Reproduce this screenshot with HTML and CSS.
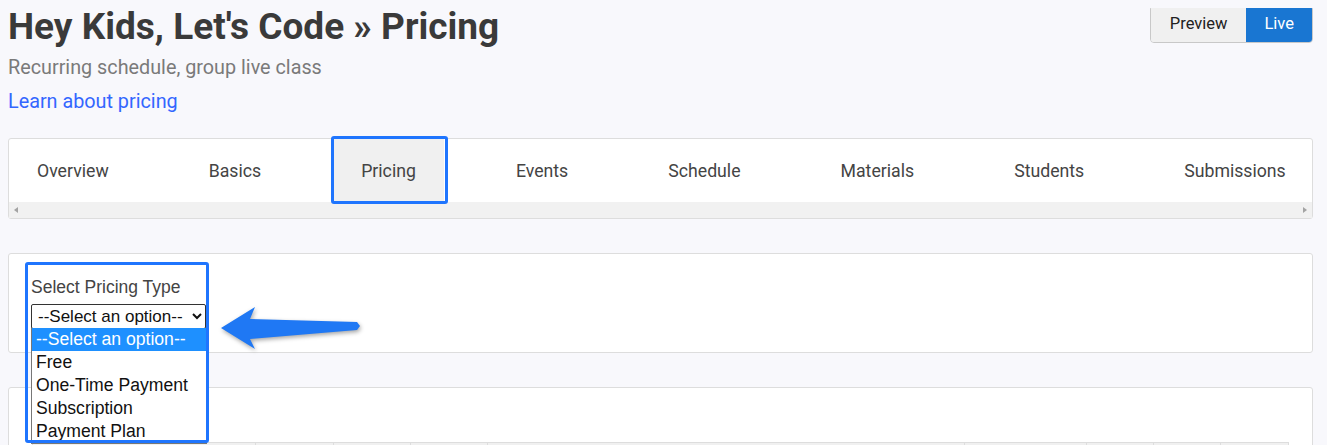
FILE: index.html
```html
<!DOCTYPE html>
<html lang="en">
<head>
    <meta charset="UTF-8">
    <title>Hey Kids, Let's Code » Pricing</title>
    <link rel="stylesheet" href="styles.css">
</head>
<body>
    <div class="page-head">
        <div>
            <h1>Hey Kids, Let's Code » Pricing</h1>
            <div class="subtitle">Recurring schedule, group live class</div>
            <a class="learn" href="#">Learn about pricing</a>
        </div>
        <div class="toggle">
            <span class="toggle-btn">Preview</span>
            <span class="toggle-btn active">Live</span>
        </div>
    </div>

    <div class="card tabs-card">
        <div class="tabs">
            <span class="tab">Overview</span>
            <span class="tab">Basics</span>
            <span class="tab current">Pricing</span>
            <span class="tab">Events</span>
            <span class="tab">Schedule</span>
            <span class="tab">Materials</span>
            <span class="tab">Students</span>
            <span class="tab">Submissions</span>
        </div>
        <div class="scrollbar">
            <span class="arrow-left"></span>
            <span class="arrow-right"></span>
        </div>
        <div class="mark mark-tab"></div>
    </div>

    <div class="card pricing-card">
        <label class="field-label">Select Pricing Type</label>
        <select class="pricing-select">
            <option>--Select an option--</option>
            <option>Free</option>
            <option>One-Time Payment</option>
            <option>Subscription</option>
            <option>Payment Plan</option>
        </select>
        <ul class="options">
            <li class="selected">--Select an option--</li>
            <li>Free</li>
            <li>One-Time Payment</li>
            <li>Subscription</li>
            <li>Payment Plan</li>
        </ul>
        <div class="mark mark-select"></div>
        <svg class="pointer" width="150" height="60" viewBox="0 0 150 60">
            <polygon points="2,27 36,6 31,18 138,21 141,25 138,29 31,38 36,48" fill="#1f78f4"/>
        </svg>
    </div>

    <div class="card table-card">
        <table class="plans">
            <tr>
                <th class="c1"></th><th class="c2"></th><th class="c2"></th><th class="c2"></th>
                <th class="c3"></th><th class="c4"></th><th class="c5"></th><th class="c5"></th><th class="c5"></th>
            </tr>
        </table>
    </div>
</body>
</html>
```

FILE: styles.css
```css
body {
    margin: 8px 14px 0 8px;
    height: 437px;
    background: #f8f8fc;
    font-family: Roboto, "Liberation Sans", sans-serif;
    color: #444;
    overflow: hidden;
}
.page-head {
    display: flex;
    justify-content: space-between;
    align-items: flex-start;
}
h1 {
    margin: 0;
    font-size: 37px;
    line-height: 38px;
    font-weight: 700;
    color: #3a3a3a;
}
.subtitle {
    margin-top: 10px;
    font-size: 19.8px;
    line-height: 24px;
    color: #7a7a7a;
}
.learn {
    display: inline-block;
    margin-top: 10px;
    font-size: 19.8px;
    line-height: 24px;
    color: #3366ff;
    text-decoration: none;
}
.toggle {
    display: flex;
    margin-top: -3px;
    border: 1px solid #c8c8c8;
    border-radius: 4px;
    overflow: hidden;
}
.toggle-btn {
    padding: 0 19px;
    height: 36px;
    line-height: 36px;
    font-size: 16.5px;
    color: #222;
    background: #f0f0f0;
}
.toggle-btn.active {
    padding: 0 18px;
    background: #1976d2;
    color: #fff;
}
.card {
    position: relative;
    background: #fff;
    border: 1px solid #ddd;
    border-radius: 3px;
}
.tabs-card {
    margin-top: 24px;
}
.tabs {
    display: flex;
    gap: 44px;
    height: 63px;
}
.tab {
    padding: 2px 28px 0 28px;
    line-height: 61px;
    font-size: 17.7px;
    color: #444;
    white-space: nowrap;
}
.tab.current {
    background: #f0f0f0;
}
.scrollbar {
    position: relative;
    height: 16px;
    background: #f1f1f1;
}
.arrow-left, .arrow-right {
    position: absolute;
    top: 5px;
    width: 0;
    height: 0;
    border-top: 3px solid transparent;
    border-bottom: 3px solid transparent;
}
.arrow-left {
    left: 5px;
    border-right: 4px solid #a3a3a3;
}
.arrow-right {
    right: 5px;
    border-left: 4px solid #a3a3a3;
}
.mark {
    position: absolute;
    border: 3px solid #1f75fe;
    border-radius: 3px;
}
.mark-tab {
    left: 322px;
    top: -3px;
    width: 111px;
    height: 62px;
}
.pricing-card {
    margin-top: 34px;
    height: 98px;
    padding: 0 22px;
    font-family: "Liberation Sans", Arial, sans-serif;
    z-index: 2;
}
.field-label {
    display: block;
    margin-top: 23px;
    font-size: 17.5px;
    line-height: 20px;
    color: #444;
}
.pricing-select {
    display: block;
    margin-top: 7px;
    width: 175px;
    height: 25px;
    font-family: "Liberation Sans", Arial, sans-serif;
    font-size: 17px;
    color: #111;
    background: #fff;
    border: 1px solid #333;
    border-radius: 2px;
    padding: 0 2px;
}
.options {
    position: absolute;
    left: 22px;
    top: 74px;
    width: 174px;
    margin: 0;
    padding: 0;
    list-style: none;
    background: #fff;
    border: 1px solid #777;
    border-top: none;
    font-size: 17.6px;
    color: #111;
}
.options li {
    height: 23px;
    line-height: 23px;
    padding-left: 4px;
    white-space: nowrap;
}
.options li.selected {
    background: #1e90ff;
    color: #fff;
}
.mark-select {
    left: 16px;
    top: 8px;
    width: 178px;
    height: 175px;
}
.pointer {
    position: absolute;
    left: 210px;
    top: 47px;
    filter: drop-shadow(1px 2px 2px rgba(0, 0, 0, 0.35));
}
.table-card {
    margin-top: 34px;
    height: 80px;
    padding: 54px 23px 0 23px;
}
.plans {
    width: 1257px;
    border-collapse: collapse;
}
.plans th {
    height: 30px;
    background: #f0f0f0;
    border: 1px solid #ddd;
    padding: 0;
}
.plans .c1 { width: 224px; }
.plans .c2 { width: 77px; }
.plans .c3 { width: 479px; }
.plans .c4 { width: 122px; }
.plans .c5 { width: 67px; }
```
